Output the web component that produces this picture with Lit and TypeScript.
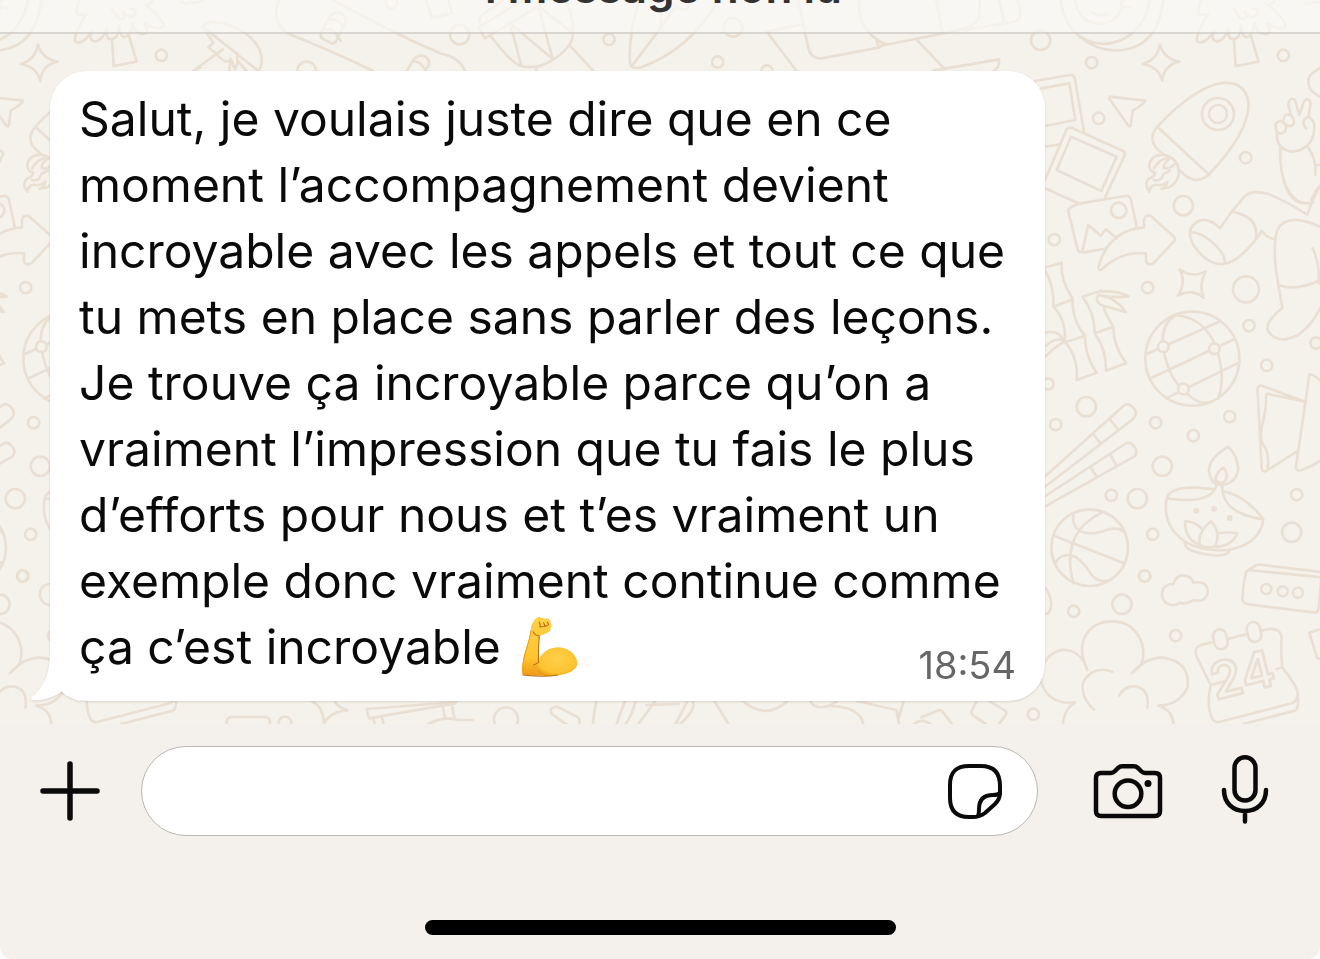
import { LitElement, html, css, svg } from "lit";
import { customElement, state } from "lit/decorators.js";

const ring = (x: number, y: number, r = 17) => svg`<circle cx=${x} cy=${y} r=${r}></circle>`;

/* Doodles are grouped by area; each group is drawn at three times its final size. */
const topLeft = svg`
  <g transform="scale(.33333)">
    <path d="M608 80Q620 60 670 70Q770 100 785 170Q787 200 775 213M608 80L775 213M608 80L640 128L625 142L650 162Q680 198 692 176L688 213M580 213L668 148M692 176L705 208L712 190V160M712 182L740 213"/>
    <path d="M838 0Q810 60 862 100Q1000 155 1120 213M1000 0Q1150 85 1320 160Q1380 172 1395 213"/>
    <path d="M965 95L985 55Q1005 30 1028 42Q1042 55 1034 70L1008 125Q1000 134 990 128L967 116Q958 108 965 95ZM988 58Q1015 55 1030 82M972 88Q1005 85 1014 112L1022 122"/>
    <path d="M1220 213L1240 180Q1255 160 1276 170Q1292 182 1286 195L1275 213M1236 186Q1260 180 1272 205M1278 0L1296 54L1355 40L1345 0"/>
    ${ring(920, 213, 28)}${ring(1174, 8)}
  </g>`;

const topMiddle = svg`
  <g transform="translate(440 0) scale(.33333)">
    <path d="M150 105Q210 185 240 197Q290 212 340 178Q400 140 400 95Q402 50 375 0M115 82L250 0M135 115L115 82M120 65Q115 52 132 40L190 0M135 115L310 10M210 70L243 193M210 70L338 177L295 18M300 22L400 100M390 137L460 213M288 205V213"/>
    <path d="M598 0Q565 100 570 190Q575 208 600 203Q750 150 835 0M574 200L665 80L705 20M663 0V80M705 20L738 30L748 10"/>
    <path d="M980 95L1090 72M980 95L1070 213M1075 0L1105 145Q1115 178 1145 175L1320 142M1258 0Q1250 80 1320 125M1310 120L1315 140"/>
    ${ring(59, 104, 29)}${ring(507, 118)}${ring(879, 82, 28)}${ring(833, 186)}${ring(981, 213)}
  </g>`;

const topRight = svg`
  <g transform="translate(880 0) scale(.33333)">
    <path d="M168 0L188 98M298 0Q305 50 285 70Q265 87 180 102L0 138M0 125Q15 133 30 132M250 90L400 66Q425 60 420 30L412 0M358 0L373 66M113 122L195 208M160 212L357 178Q360 200 342 214"/>
    <path d="M543 0Q548 70 600 110Q660 160 730 150Q835 135 850 0M585 0Q592 52 635 67Q700 85 727 22M600 110Q650 140 700 128Q790 105 810 0M638 38Q660 52 682 42M732 0Q716 12 728 20L748 22"/>
    <path d="M840 133Q850 175 898 185Q852 195 847 243Q836 200 788 192Q832 180 840 133Z"/>
    <path d="M965 0Q950 35 958 42Q965 46 984 44Q945 105 952 124Q970 138 1002 95Q990 125 1015 124Q1035 118 1046 84Q1042 120 1062 118Q1080 115 1083 80Q1088 118 1105 110Q1120 100 1123 70Q1130 108 1165 100Q1172 95 1160 70Q1200 92 1216 80Q1222 65 1165 15Q1180 12 1185 0M1062 116L1067 198L1136 185L1113 108M1062 26Q1080 65 1096 55Q1104 50 1094 35Q1115 60 1130 45Q1140 28 1118 26M1275 8Q1290 15 1297 5Q1310 14 1334 0"/>
    <path d="M465 243L570 225Q582 224 585 238L612 395M484 265L568 250L586 360L495 378M495 440L540 433"/>
    <path d="M495 540L560 388Q566 380 576 384L728 452Q738 458 733 468L675 592M495 565L600 612M573 410L710 470L664 573L530 510Z"/>
    <path d="M690 290L795 302Q798 308 758 332L752 378Q748 382 740 370L688 296Z"/>
    <path d="M832 380Q930 275 1010 252Q1095 235 1106 310Q1106 400 985 525Q940 562 895 505M832 380L988 525M832 380Q795 425 850 462"/>
    <path d="M850 464Q808 466 808 500Q810 515 825 518Q825 530 808 535Q790 550 808 575Q812 548 840 556Q860 550 862 545Q860 560 845 566Q885 565 896 525Q900 475 850 464M822 506Q840 472 872 474Q848 490 852 505Q870 510 888 488M822 540Q845 545 850 522L870 512"/>
    <path d="M1190 395Q1188 453 1240 455Q1305 445 1303 375Q1298 350 1280 352Q1262 365 1278 385M1233 345L1225 315Q1228 288 1245 300L1258 345L1272 305Q1285 288 1292 310L1285 350M1192 397Q1178 370 1200 362Q1225 370 1215 395Q1202 405 1192 397M1210 360Q1215 335 1235 348Q1250 365 1235 378Q1222 380 1216 372"/>
    <path d="M1201 445Q1198 560 1250 600M1285 443Q1310 480 1306 524M1306 495H1326M1326 550Q1300 580 1295 600M1326 203Q1270 225 1290 265Q1300 282 1326 292"/>
    ${ring(1014, 342, 48)}${ring(1014, 342, 27)}${ring(482, 121, 29)}${ring(635, 188)}${ring(1210, 166)}${ring(656, 355)}${ring(1097, 473)}
  </g>`;

const upperRight = svg`
  <g transform="translate(1030 180) scale(.33333)">
    <path d="M150 70L285 48Q300 45 303 60L320 140M150 70L125 80Q112 86 116 98L142 205Q146 220 162 217L228 206M157 213L175 135L212 167L228 148L260 175"/>
    <path d="M205 262Q235 150 342 142V118Q347 103 362 108L432 170Q438 178 432 184L370 250Q355 258 348 245V220Q275 212 215 268Q207 274 205 262Z"/>
    <path d="M570 145Q525 100 490 135Q470 155 490 195Q530 255 580 252Q620 250 680 175L695 153Q712 175 735 177M480 157Q510 155 545 185Q590 225 583 248M570 145L605 95L645 48Q665 28 715 42Q765 62 832 104Q850 50 870 20M605 95Q688 110 678 175M760 0Q785 85 850 66"/>
    <path d="M870 140Q770 95 742 150Q725 200 745 315L757 384Q700 430 715 455Q745 495 805 465Q850 430 870 385M745 315Q800 335 870 300M848 205Q870 250 866 310"/>
    <path d="M449 268Q485 295 527 275Q505 315 521 353Q485 325 443 347Q470 310 449 268Z"/>
    <path d="M48 262L95 248Q90 300 128 355Q125 420 165 467Q165 530 200 578L140 600Q145 530 104 485Q110 420 70 380Q75 330 48 275M70 380L128 358M104 487L165 468M157 350L213 332M157 350Q195 400 194 460Q230 510 228 572L289 550Q250 500 250 440Q225 400 222 385M194 460L250 440M213 335Q260 330 296 349Q250 355 205 345Q192 362 215 376L287 396Q260 355 215 348M48 457Q90 450 102 485Q70 505 48 528M48 498Q70 475 98 478"/>
    <path d="M350 522L568 425M362 595L612 478M408 655L622 550M398 485Q398 425 440 405Q520 415 553 490Q590 580 565 655M402 515Q420 600 460 627Q500 680 545 665"/>
    ${ring(487, 536, 141)}
    <g class="paper">${ring(400, 500, 16)}${ring(553, 506, 16)}${ring(460, 627, 16)}</g>
    ${ring(266, 91, 23)}${ring(460, 77, 29)}${ring(73, 179)}${ring(353, 323)}${ring(648, 328, 39)}${ring(657, 437)}${ring(710, 556)}${ring(858, 489)}${ring(54, 612)}
  </g>`;

const middleRight = svg`
  <g transform="translate(1030 390) scale(.33333)">
    <path d="M695 235L683 5Q680 -16 695 -13L825 35M695 235Q697 248 710 242L800 185M708 15Q710 60 694 115Q690 150 700 165Q720 190 712 240M708 15Q712 8 722 14L825 34M838 -45L798 230Q798 245 815 240L845 228L874 210M838 -45Q845 -52 874 -25"/>
    <path d="M40 264L280 48Q295 35 312 55Q325 72 308 88L40 294M190 133L212 160M240 88L264 118M40 322L285 162Q300 152 315 172Q325 190 312 200L40 352M182 232L200 260M240 192L258 225"/>
    <path d="M72 437L282 520M215 368Q90 430 130 580M130 375Q125 415 160 427Q190 435 230 420Q270 408 285 430M75 520Q95 485 135 500Q160 515 185 555Q205 578 230 572"/>
    <path d="M410 325Q420 290 500 293L555 298M410 325Q395 410 470 458Q520 485 590 480Q690 465 700 388Q650 320 580 303M410 325Q545 345 560 285M577 290Q575 370 700 388M465 455Q460 480 520 492Q590 505 600 480M595 170Q535 205 537 245Q545 285 575 285Q620 280 625 235Q620 195 595 170ZM580 233Q555 250 557 270Q575 290 590 265Q592 245 580 233ZM510 465Q465 450 465 393Q495 395 515 415M543 393Q500 430 510 465Q530 478 555 468Q575 430 543 393ZM563 430Q590 425 622 430Q605 470 558 470"/>
    <g class="dots">${ring(499, 362, 9)}${ring(552, 356, 9)}${ring(599, 384, 9)}</g>
    ${ring(179, 473, 115)}${ring(169, 50, 29)}${ring(77, 104)}${ring(377, 98)}${ring(490, 137)}${ring(599, 80)}${ring(397, 229, 29)}${ring(322, 326, 29)}${ring(244, 316)}${ring(368, 433)}${ring(344, 558)}${ring(800, 314)}${ring(785, 427, 29)}
  </g>`;

const lowerRight = svg`
  <g transform="translate(1030 560) scale(.33333)">
    <path d="M655 30L874 52M648 38Q638 80 637 118Q640 132 655 133L855 158Q868 158 868 120L874 52M650 35L676 17Q685 12 700 15L874 36"/>
    <path d="M430 72Q440 42 465 47Q485 50 490 68Q535 60 533 100Q525 128 490 120Q470 135 452 128Q430 142 410 130Q390 115 398 90Q405 72 430 72M48 85Q75 130 55 160L48 162"/>
    <path d="M172 330C150 260 80 250 45 305C10 360 50 440 135 427Q100 450 98 496M172 330C130 240 180 184 248 184C320 184 356 260 333 315L305 340Q350 290 400 293Q480 305 473 380Q450 435 385 437Q430 450 430 496M248 335Q190 315 160 365Q150 410 192 449M268 407Q285 375 320 380Q360 390 352 443"/>
    <path d="M545 247L515 254Q490 262 500 290L542 375Q528 440 548 478Q554 488 568 486L785 430Q805 422 803 395Q795 370 757 322Q752 280 755 230Q750 205 720 207L695 212M595 237L650 222M542 375L580 365M740 327L757 322M640 492L795 452Q808 445 803 400M838 218L874 206M838 218L860 290Q862 298 874 295"/>
    <rect x="551" y="208" width="40" height="60" rx="20" transform="rotate(-12 571 238)"></rect>
    <rect x="652" y="186" width="40" height="60" rx="20" transform="rotate(-12 672 216)"></rect>
    <text class="date" x="556" y="420" transform="rotate(-14 556 420)">24</text>
    ${ring(709, 87, 15)}${ring(758, 94, 15)}${ring(804, 98, 15)}${ring(344, 48)}${ring(276, 133, 29)}${ring(131, 154)}${ring(437, 227)}${ring(10, 463)}
  </g>`;

const bottomStrip = svg`
  <g transform="translate(0 640) scale(.33333)">
    <path d="M680 256V245Q682 231 695 231H795Q808 231 810 245V256M935 183Q970 200 972 250Q990 215 1042 211Q1010 200 1005 183M1370 186L1100 207L1107 235L1365 190M1120 235L1125 256M1145 230L1152 256M1328 195L1335 235M1355 190L1363 235M1285 252Q1330 228 1375 240L1418 240"/>
    ${ring(855, 249, 19)}${ring(1518, 238, 36)}
    <g transform="translate(1500 -120) scale(1.0714 1)">
      <path d="M160 320L215 350Q228 358 220 376M160 320Q135 322 145 342L190 376M270 303Q262 340 260 376M350 303L325 376M380 303Q370 345 350 376M435 303L385 376M410 315L500 312M540 303Q550 330 500 376M525 303L490 376M600 303L642 376M680 303Q745 362 805 303M870 303Q880 330 920 318L945 303M925 318Q1010 320 1018 376M1000 303L1110 330L1118 376M1130 303L1115 360M1155 376Q1180 350 1210 376M1180 352L1228 331Q1236 328 1242 338L1268 376M1335 303L1320 335Q1320 345 1330 350L1365 376M1370 303L1414 332Q1422 338 1414 348L1395 376"/>
    </g>
  </g>`;

@customElement("chat-wallpaper")
export class ChatWallpaper extends LitElement {
  static styles = css`
    :host { display: block; overflow: hidden; background: #f5f2eb; }
    .art { display: block; width: 100%; height: 100%; fill: none; stroke: #eadfd3; stroke-width: 8; stroke-linecap: round; stroke-linejoin: round; }
    .paper { fill: #f5f2eb; }
    .dots { fill: #eadfd3; stroke: none; }
    .date { font: 600 152px Inter, sans-serif; fill: #f5f2eb; stroke-width: 8; }
  `;
  render() {
    return html`<svg class="art" aria-hidden="true">
      <defs><g id="doodles">${topLeft}${topMiddle}${topRight}${upperRight}${middleRight}${lowerRight}${bottomStrip}</g></defs>
      <use href="#doodles" x="-1122"></use>
      <use href="#doodles"></use>
      <use href="#doodles" x="1122"></use>
    </svg>`;
  }
}

@customElement("message-bubble")
export class MessageBubble extends LitElement {
  static styles = css`
    :host { display: block; position: relative; box-sizing: border-box; max-width: 995px; padding: 15px 29px 21px; border-radius: 37px; background: #fff; filter: drop-shadow(0 1px 1px rgba(60, 50, 30, 0.16)); }
    .tail { position: absolute; left: -20px; bottom: 0; width: 50px; height: 52px; fill: #fff; }
    .text { margin: 0; font: 400 48px/66px Inter, "Liberation Sans", sans-serif; color: #0a0a0a; }
    .emoji { width: 60px; height: 62px; margin: -16px 0 0 6px; vertical-align: -14px; }
    .time { float: right; margin: 29px 0 -7px; font-size: 38px; line-height: 44px; color: #666; }
  `;
  render() {
    return html`
      <svg class="tail" viewBox="0 0 50 52" aria-hidden="true">
        <path d="M20 0C20 26 15 36 1.500 48.500Q0 51 3.500 51.500Q21 51 31.500 42.500Q38 49 50 52V0Z"></path>
      </svg>
      <p class="text">Salut, je voulais juste dire que en ce moment l’accompagnement devient incroyable avec les appels et tout ce que tu mets en place sans parler des leçons. Je trouve ça incroyable parce qu’on a vraiment l’impression que tu fais le plus d’efforts pour nous et t’es vraiment un exemple donc vraiment continue comme ça c’est incroyable
        <svg class="emoji" viewBox="0 0 168 186" preserveAspectRatio="none" role="img" aria-label="💪">
          <defs>
            <linearGradient id="skin" x1="0" y1="0" x2="0" y2="1">
              <stop offset="0" stop-color="#ffd04a"></stop>
              <stop offset=".7" stop-color="#fdc42e"></stop>
              <stop offset="1" stop-color="#ee9a17"></stop>
            </linearGradient>
            <radialGradient id="muscle" cx=".5" cy=".4" r=".65">
              <stop offset="0" stop-color="#ffd04a"></stop>
              <stop offset=".75" stop-color="#fcc32f"></stop>
              <stop offset="1" stop-color="#e99816"></stop>
            </radialGradient>
          </defs>
          <path fill="url(#skin)" d="M8 176C2 165 8 130 14 108C24 75 30 55 31 35C34 18 43 5 52 3C59 2 65 8 70 8C80 5 88 12 85 20C91 26 88 33 86 38C87 46 74 53 55 59C52 85 51 115 52 139L76 177C55 182 25 178 8 176Z"></path>
          <path fill="url(#muscle)" d="M47 143C60 108 82 94 108 94C137 95 160 118 161 142C158 166 125 181 76 180C55 180 45 168 47 143Z"></path>
          <path fill="none" stroke="#bd6d0c" stroke-width="3" stroke-linecap="round" d="M54 60C52 87 51 115 52 139Q45 144 38 147M54 59Q42 60 37 47M8 177Q70 185 105 177M54 18L57 28L55 33M66 20L70 30M77 18L80 26L72 31L57 33"></path>
          <path fill="none" stroke="#e9a01d" stroke-width="3" d="M31 42C28 72 15 103 10 132C8 145 8 160 9 174"></path>
        </svg><time class="time" datetime="18:54">18:54</time></p>
    `;
  }
}

@customElement("message-composer")
export class MessageComposer extends LitElement {
  @state() private draft = "";
  static styles = css`
    :host { display: block; box-sizing: border-box; padding: 22px 0 24px; background: #f4f0eb; border-radius: 0 0 12px 12px; }
    .row { display: flex; align-items: center; height: 90px; padding: 0 51px 0 40px; }
    .icon { flex: none; display: block; padding: 0; border: 0; background: none; cursor: pointer; }
    .icon svg { display: block; fill: none; stroke: #0a0a0a; stroke-linecap: round; stroke-linejoin: round; }
    .icon .spot { fill: #0a0a0a; stroke: none; }
    .field { flex: 1; min-width: 0; display: flex; align-items: center; box-sizing: border-box; height: 90px; margin: 0 55px 0 41px; padding: 0 34px; border: 1px solid #b9b8b6; border-radius: 45px; background: #fff; }
    .entry { flex: 1; min-width: 0; height: 66px; padding: 0; border: 0; outline: 0; background: none; font: 400 48px/66px Inter, sans-serif; color: #0a0a0a; }
    .mic { margin-left: 58px; }
    .home { width: 471px; max-width: 60%; height: 15px; margin: 84px auto 0; border-radius: 8px; background: #000; }
  `;
  render() {
    return html`
      <div class="row">
        <button class="icon" aria-label="Joindre">
          <svg width="60" height="60" viewBox="0 0 60 60" stroke-width="5.500"><path d="M30 3V57M3 30H57"/></svg>
        </button>
        <div class="field">
          <input class="entry" type="text" aria-label="Message" .value=${this.draft}
            @input=${(e: Event) => { this.draft = (e.target as HTMLInputElement).value; }} />
          <button class="icon" aria-label="Autocollants">
            <svg width="56" height="56" viewBox="0 0 56 56" stroke-width="4">
              <path d="M22 3H34C47 3 53 10 53 23V30C53 34 51 38 48 41L38 50C34 53 31 54 26 54H22C9 54 3 47 3 35V22C3 9 9 3 22 3Z"/>
              <path d="M31 53Q32 51 32 46C32 36 37 32 46 32Q51 32 53 30"/>
            </svg>
          </button>
        </div>
        <button class="icon" aria-label="Appareil photo">
          <svg width="70" height="56" viewBox="0 0 70 56" stroke-width="4.500">
            <path d="M7 10H18Q20 10 22 8L25 5Q27 3.200 29 3.200H41Q43 3.200 45 5L48 8Q50 10 52 10H62Q67 10 67 15V48Q67 53 62 53H8Q3 53 3 48V15Q3 10 8 10Z"/>
            <circle cx="35" cy="30.700" r="13.300"/>
            <circle class="spot" cx="55" cy="20.500" r="3.500"/>
          </svg>
        </button>
        <button class="icon mic" aria-label="Message vocal">
          <svg width="48" height="72" viewBox="0 0 48 72" stroke-width="4.500">
            <rect x="13.500" y="2.300" width="21" height="43.300" rx="10.500"/>
            <path d="M3 35C3 48 12 56 24 56S45 48 45 35M24 56V66.500"/>
          </svg>
        </button>
      </div>
      <div class="home"></div>
    `;
  }
}

@customElement("app-root")
export class AppRoot extends LitElement {
  static styles = css`
    :host { display: flex; flex-direction: column; position: relative; min-height: 100vh; overflow: hidden; background: #fff; }
    .wallpaper { position: absolute; inset: 0 0 30px; }
    .notice { position: relative; display: flex; align-items: flex-end; justify-content: center; box-sizing: border-box; height: 34px; padding-bottom: 20px; overflow: hidden; border-bottom: 2px solid rgba(150, 142, 134, 0.32); background: rgba(250, 250, 248, 0.64); font: 600 44px/50px Inter, "Liberation Sans", sans-serif; color: #333; }
    .chat { position: relative; flex: 1; display: flex; align-items: flex-start; padding: 37px 50px 23px; }
    .composer { position: relative; height: 235px; }
  `;
  render() {
    return html`
      <chat-wallpaper class="wallpaper"></chat-wallpaper>
      <header class="notice">1 message non lu</header>
      <main class="chat"><message-bubble></message-bubble></main>
      <message-composer class="composer"></message-composer>
    `;
  }
}
